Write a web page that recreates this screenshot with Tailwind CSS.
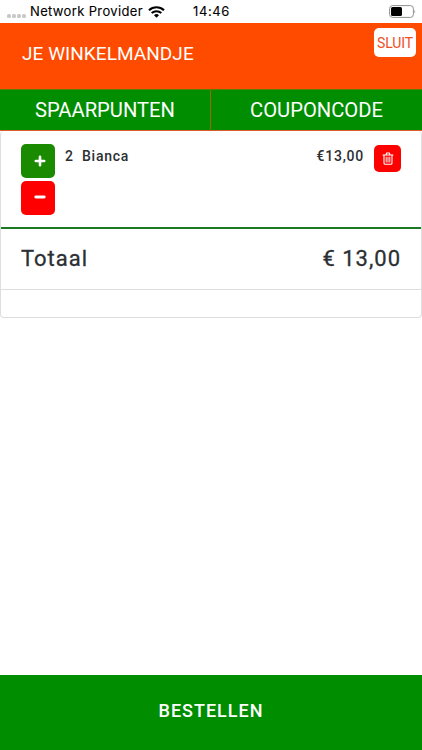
<!DOCTYPE html>
<html lang="nl">
<head>
    <meta charset="UTF-8">
    <meta name="viewport" content="width=device-width, initial-scale=1.0">
    <title>Je winkelmandje</title>
    <script src="https://cdn.jsdelivr.net/npm/@tailwindcss/browser@4"></script>
</head>
<body class="bg-white">
<div class="flex flex-col h-[750px] w-[422px] overflow-hidden font-['Roboto',sans-serif] text-[#2b2f33]">

  <!-- status bar -->
  <div class="flex items-center h-[23px] shrink-0 pl-[7px] pr-[6px] text-black font-['Inter',sans-serif] text-[13px] leading-[23px]">
    <div class="flex gap-px mt-[8px] mr-[4px]">
      <span class="size-[4px] rounded-[1.5px] bg-[#c9c9c9]"></span>
      <span class="size-[4px] rounded-[1.5px] bg-[#c9c9c9]"></span>
      <span class="size-[4px] rounded-[1.5px] bg-[#c9c9c9]"></span>
      <span class="size-[4px] rounded-[1.5px] bg-[#c9c9c9]"></span>
    </div>
    <span class="w-[118px] tracking-[0.35px] whitespace-nowrap [-webkit-text-stroke:0.1px_#000]">Network Provider</span>
    <svg class="w-[17px] h-[12px]" viewBox="0 0 17 12" fill="none" stroke="#000" stroke-width="2.1">
      <path d="M1 4.3a10.8 10.8 0 0 1 15 0"/>
      <path d="M3.7 7.1a7 7 0 0 1 9.6 0"/>
      <path d="M6 9.2a3.7 3.7 0 0 1 5 0L8.500 11.700z" fill="#000" stroke="none"/>
    </svg>
    <span class="ml-[28px] tracking-[0.6px] [-webkit-text-stroke:0.1px_#000]">14:46</span>
    <svg class="ml-auto w-[27px] h-[13px]" viewBox="0 0 27 13">
      <rect x="0.600" y="0.600" width="23.800" height="11.800" rx="3" fill="#fff" stroke="#8e8e8e"/>
      <rect x="2" y="2" width="11" height="9" rx="1.500" fill="#000"/>
      <path d="M25.500 4.500q1.300 2 0 4z" fill="#8e8e8e"/>
    </svg>
  </div>

  <!-- header -->
  <div class="flex justify-between h-[66px] shrink-0 bg-[#ff4b00] pl-[22px] pr-[6px]">
    <h1 class="text-white text-[19px] leading-[62px] tracking-[0.05px]">JE WINKELMANDJE</h1>
    <button class="mt-[5px] w-[42px] h-[29px] rounded-[5px] bg-white text-[#f04e23] text-[14px] tracking-[-0.1px] leading-[30px]">SLUIT</button>
  </div>

  <!-- tabs -->
  <div class="grid grid-cols-2 h-[42px] shrink-0 text-white text-[20.2px] leading-[41px] text-center border-y border-t-[#5d7d00] border-b-[#e05a30] bg-[#008e00]">
    <div class="border-r border-[#9a6a00]">SPAARPUNTEN</div>
    <div>COUPONCODE</div>
  </div>

  <!-- cart -->
  <div class="h-[187px] shrink-0 border border-t-0 border-[#dedede] rounded-[4px]">
    <div class="flex h-[98px] pl-5 pr-5 pt-[13px] border-b-2 border-[#1a7a24] text-[14px] font-medium tracking-[0.75px] leading-[25px]">
      <div class="flex flex-col gap-[3px] mr-[10px]">
        <button class="flex items-center justify-center size-[34px] rounded-[5px] bg-[#1a8a00]">
          <svg class="ml-[4px] mt-[-1px] size-[12px]" viewBox="0 0 12 12" stroke="#fff" stroke-width="2.600" stroke-linecap="round"><path d="M6 1.800v8.400M1.800 6h8.400"/></svg>
        </button>
        <button class="flex items-center justify-center size-[34px] rounded-[5px] bg-[#ff0000]">
          <svg class="ml-[4px] mt-[-2px] size-[12px]" viewBox="0 0 12 12" stroke="#fff" stroke-width="2.900" stroke-linecap="round"><path d="M1.800 6h8.400"/></svg>
        </button>
      </div>
      <span class="w-[17px]">2</span>
      <span>Bianca</span>
      <span class="ml-auto mr-[10px]">€13,00</span>
      <button class="flex items-center justify-center mt-px w-[27px] h-[27px] rounded-[5px] bg-[#ff0000]">
        <svg class="w-[12px] h-[13px]" viewBox="0 0 12 13" fill="none" stroke="#fff" stroke-linecap="round" stroke-linejoin="round">
          <path d="M1 3h10M4 3l.6-2h2.800L8 3M2 3v8q0 1.300 1.200 1.300h5.600Q10 12.300 10 11V3" stroke-width="1.100"/>
          <path d="M4.200 5.200v4.900M6 5.200v4.900M7.800 5.200v4.900" stroke-width="0.900"/>
        </svg>
      </button>
    </div>
    <div class="flex justify-between h-[61px] px-5 border-b border-[#dedede] text-[22px] tracking-[1px] leading-[60px] [-webkit-text-stroke:0.3px_#2b2f33]">
      <span>Totaal</span>
      <span>€ 13,00</span>
    </div>
  </div>

  <!-- order button -->
  <button class="mt-auto h-[75px] shrink-0 bg-[#008e00] text-white text-[18px] font-medium tracking-[1px] leading-[71px] pb-1">BESTELLEN</button>
</div>
</body>
</html>
